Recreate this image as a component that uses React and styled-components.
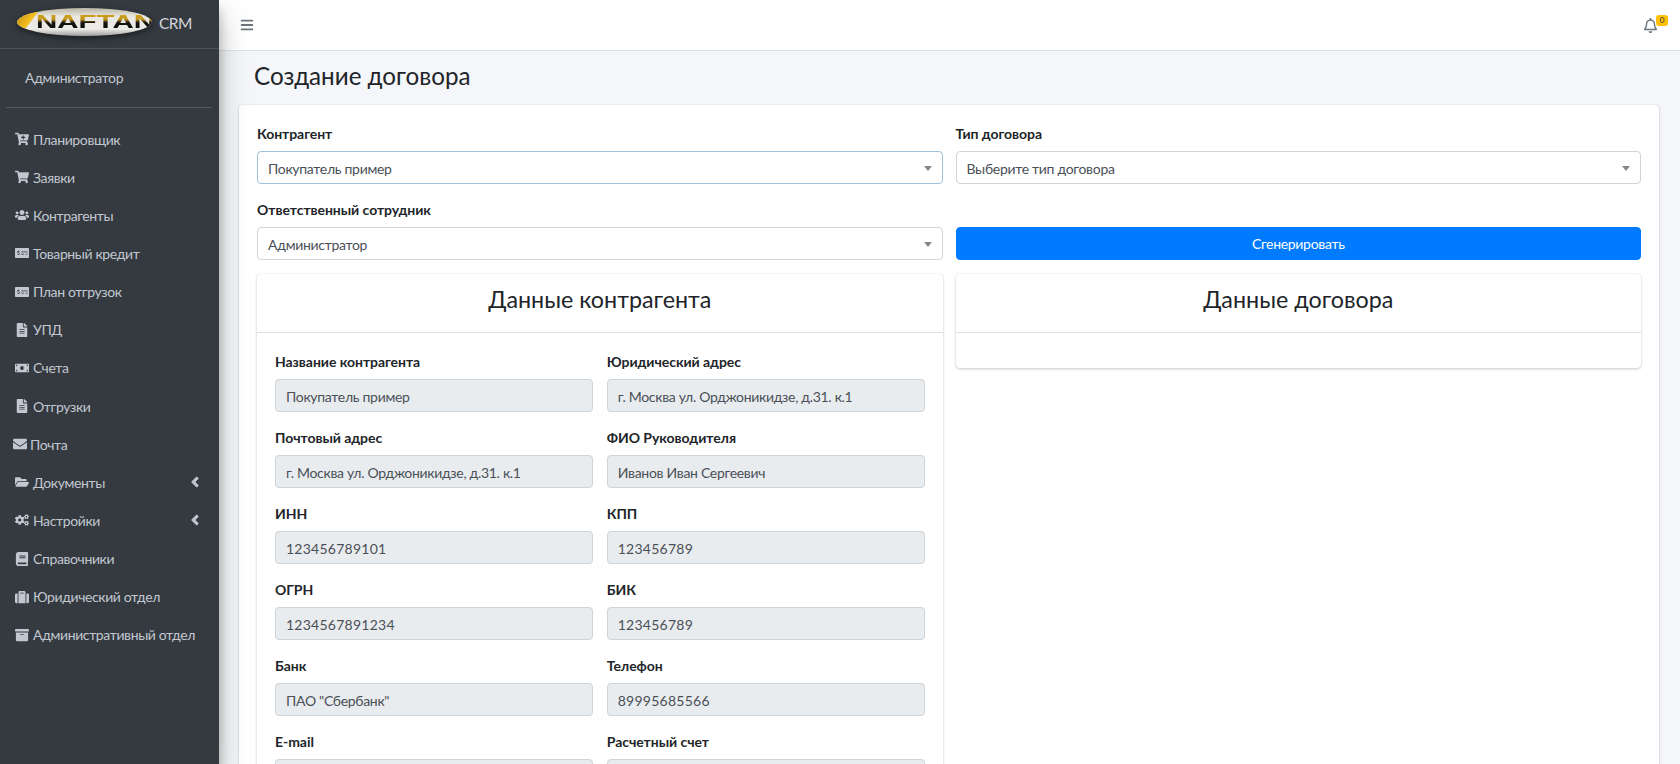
import React from "react"
import styled, { createGlobalStyle } from "styled-components"
import {
  FaArchive, FaBars, FaBook, FaCartPlus, FaCogs, FaEnvelope, FaFileAlt, FaFolderOpen,
  FaAngleLeft, FaMoneyBill, FaMoneyCheckAlt, FaRegBell, FaShoppingCart, FaSuitcase, FaUsers,
} from "react-icons/fa"

const GlobalStyle = createGlobalStyle`
  html, body { margin: 0; padding: 0; height: 100%; overflow: hidden; }
  body {
    font-family: Lato, "Noto Sans", sans-serif;
    font-size: 14px;
    letter-spacing: -0.3px;
    color: #212529;
    background: #f4f6f9;
  }
  * { box-sizing: border-box; }
`

const menu = [
  { icon: FaCartPlus, label: "Планировщик" },
  { icon: FaShoppingCart, label: "Заявки" },
  { icon: FaUsers, label: "Контрагенты" },
  { icon: FaMoneyCheckAlt, label: "Товарный кредит" },
  { icon: FaMoneyCheckAlt, label: "План отгрузок" },
  { icon: FaFileAlt, label: "УПД" },
  { icon: FaMoneyBill, label: "Счета" },
  { icon: FaFileAlt, label: "Отгрузки" },
  { icon: FaEnvelope, label: "Почта", narrow: true },
  { icon: FaFolderOpen, label: "Документы", more: true },
  { icon: FaCogs, label: "Настройки", more: true },
  { icon: FaBook, label: "Справочники" },
  { icon: FaSuitcase, label: "Юридический отдел" },
  { icon: FaArchive, label: "Административный отдел" },
]

const fields = [
  ["Название контрагента", "Покупатель пример"],
  ["Юридический адрес", "г. Москва ул. Орджоникидзе, д.31. к.1"],
  ["Почтовый адрес", "г. Москва ул. Орджоникидзе, д.31. к.1"],
  ["ФИО Руководителя", "Иванов Иван Сергеевич"],
  ["ИНН", "123456789101"],
  ["КПП", "123456789"],
  ["ОГРН", "1234567891234"],
  ["БИК", "123456789"],
  ["Банк", 'ПАО "Сбербанк"'],
  ["Телефон", "89995685566"],
  ["E-mail", ""],
  ["Расчетный счет", ""],
]

const Logo = () => (
  <LogoSvg viewBox="0 0 135 28" role="img" aria-label="Naftan">
    <defs>
      <clipPath id="logoClip">
        <ellipse cx="67.5" cy="14" rx="67.5" ry="14" />
      </clipPath>
      <linearGradient id="logoBody" x1="0" x2="0" y1="0" y2="1">
        <stop offset="0" stopColor="#b9b5a4" />
        <stop offset="0.3" stopColor="#e8e6df" />
        <stop offset="0.75" stopColor="#ecebe8" />
        <stop offset="1" stopColor="#9d9d9b" />
      </linearGradient>
      <linearGradient id="logoWedge" x1="0" x2="1" y1="0" y2="0.6">
        <stop offset="0" stopColor="#a97f10" />
        <stop offset="0.6" stopColor="#f0b91c" />
        <stop offset="1" stopColor="#f4d25a" />
      </linearGradient>
      <linearGradient id="logoLetters" x1="0" x2="0" y1="0" y2="1">
        <stop offset="0" stopColor="#d8a516" />
        <stop offset="0.42" stopColor="#c4961c" />
        <stop offset="0.58" stopColor="#14130f" />
        <stop offset="1" stopColor="#0c0c0c" />
      </linearGradient>
    </defs>
    <g clipPath="url(#logoClip)">
      <rect width="135" height="28" fill="url(#logoBody)" />
      <path d="M0 0H24L9 20H0Z" fill="url(#logoWedge)" />
      <text x="19" y="19.5" textLength="119" lengthAdjust="spacingAndGlyphs" fill="url(#logoLetters)">NAFTAN</text>
    </g>
  </LogoSvg>
)

const Field = ({ label, value }) => (
  <FormGroup>
    <Label>{label}</Label>
    <ReadonlyInput $digits={/^\d+$/.test(value)}>{value}</ReadonlyInput>
  </FormGroup>
)

const SelectField = ({ label, value, focused }) => (
  <FormGroup>
    <Label>{label}</Label>
    <Select $focused={focused}>{value}<Caret /></Select>
  </FormGroup>
)

export default function App() {
  return (
    <Layout>
      <GlobalStyle />
      <Sidebar>
        <Brand>
          <Logo />
          <BrandText>CRM</BrandText>
        </Brand>
        <UserPanel>Администратор</UserPanel>
        <Menu>
          {menu.map(({ icon: Icon, label, narrow, more }) => (
            <MenuItem key={label}>
              <IconSlot $narrow={narrow}><Icon /></IconSlot>
              {label}
              {more && <MoreIcon><FaAngleLeft /></MoreIcon>}
            </MenuItem>
          ))}
        </Menu>
      </Sidebar>
      <Main>
        <Topbar>
          <BarsButton><FaBars /></BarsButton>
          <Bell>
            <FaRegBell />
            <Badge>0</Badge>
          </Bell>
        </Topbar>
        <PageTitle>Создание договора</PageTitle>
        <Card>
          <TwoColumns>
            <SelectField label="Контрагент" value="Покупатель пример" focused />
            <SelectField label="Тип договора" value="Выберите тип договора" />
            <SelectField label="Ответственный сотрудник" value="Администратор" />
            <ButtonCell><PrimaryButton>Сгенерировать</PrimaryButton></ButtonCell>
          </TwoColumns>
          <TwoColumns>
            <SubCard>
              <SubCardTitle>Данные контрагента</SubCardTitle>
              <SubCardBody>
                <FieldGrid>
                  {fields.map(([label, value]) => <Field key={label} label={label} value={value} />)}
                </FieldGrid>
              </SubCardBody>
            </SubCard>
            <SubCard>
              <SubCardTitle>Данные договора</SubCardTitle>
              <SubCardBody />
            </SubCard>
          </TwoColumns>
        </Card>
      </Main>
    </Layout>
  )
}

const Layout = styled.div`
  display: flex;
  height: 100vh;
  overflow: hidden;
`

const Sidebar = styled.aside`
  flex: 0 0 219px;
  width: 219px;
  min-width: 0;
  background: #343a40;
  color: #c2c7d0;
  letter-spacing: -0.38px;
  box-shadow: 0 14px 28px rgba(0, 0, 0, 0.25), 0 10px 10px rgba(0, 0, 0, 0.22);
  z-index: 2;
`

const Brand = styled.div`
  height: 49px;
  display: flex;
  align-items: flex-start;
  gap: 7px;
  padding: 8px 0 0 17px;
  border-bottom: 1px solid #4b545c;
`

const LogoSvg = styled.svg`
  width: 135px;
  height: 28px;
  flex: none;
  filter: drop-shadow(0 2px 3px rgba(0, 0, 0, 0.5));
  text {
    font-family: "Liberation Sans", sans-serif;
    font-size: 19px;
    font-weight: 700;
    letter-spacing: 0;
  }
`

const BrandText = styled.span`
  font-size: 15.5px;
  line-height: 30px;
  font-weight: 400;
  letter-spacing: -0.5px;
  color: rgba(255, 255, 255, 0.8);
`

const UserPanel = styled.div`
  height: 59px;
  margin: 0 7px 12px 6px;
  padding: 0 0 2px 19px;
  display: flex;
  align-items: center;
  border-bottom: 1px solid #4f5962;
`

const Menu = styled.nav`
  display: flex;
  flex-direction: column;
`

const MenuItem = styled.a`
  height: 38.15px;
  flex: none;
  display: flex;
  align-items: center;
  padding: 0 16px 0 11px;
  white-space: nowrap;
`

const IconSlot = styled.span`
  flex: none;
  width: ${(p) => (p.$narrow ? "18px" : "21px")};
  margin-right: 1px;
  display: flex;
  justify-content: center;
  svg {
    flex: none;
    width: auto;
    height: 14px;
  }
`

const MoreIcon = styled.span`
  margin-left: auto;
  display: flex;
  font-size: 16px;
  svg {
    stroke: currentColor;
    stroke-width: 24px;
  }
`

const Main = styled.main`
  flex: 1;
  min-width: 0;
`

const Topbar = styled.header`
  height: 51px;
  padding: 0 13px 0 21px;
  display: flex;
  align-items: center;
  justify-content: space-between;
  background: #fff;
  border-bottom: 1px solid #dee2e6;
`

const BarsButton = styled.span`
  display: flex;
  color: #6c757d;
  font-size: 14px;
`

const Bell = styled.span`
  position: relative;
  display: flex;
  margin-right: 9px;
  color: #6c757d;
  font-size: 15px;
`

const Badge = styled.span`
  position: absolute;
  top: -3px;
  right: -10px;
  width: 12px;
  height: 11px;
  border-radius: 3px;
  background: #ffc107;
  color: #1f2d3d;
  font-size: 8px;
  line-height: 11px;
  letter-spacing: 0;
  text-align: center;
`

const PageTitle = styled.h1`
  margin: 0;
  height: 54px;
  padding: 8px 0 0 35px;
  font-size: 24.2px;
  line-height: 34px;
  font-weight: 400;
  letter-spacing: 0;
`

const Card = styled.section`
  margin: 0 21px 0 20px;
  padding: 17px 18px 0;
  background: #fff;
  border-radius: 4px;
  box-shadow: 0 0 1px rgba(0, 0, 0, 0.125), 0 1px 3px rgba(0, 0, 0, 0.2);
`

const TwoColumns = styled.div`
  display: grid;
  grid-template-columns: 1fr 1fr;
  column-gap: 13px;
  align-items: start;
`

const FormGroup = styled.div`
  margin-bottom: 14px;
`

const Label = styled.div`
  height: 24px;
  margin-bottom: 5px;
  line-height: 24px;
  font-weight: 700;
  letter-spacing: -0.05px;
`

const Select = styled.div`
  position: relative;
  height: 33px;
  padding: 1px 10px 0;
  display: flex;
  align-items: center;
  background: #fff;
  color: #495057;
  border: 1px solid ${(p) => (p.$focused ? "#9fc1db" : "#ced4da")};
  border-radius: 4px;
`

const Caret = styled.span`
  position: absolute;
  top: 14px;
  right: 10px;
  border-style: solid;
  border-width: 5px 4px 0;
  border-color: #888 transparent transparent;
`

const ButtonCell = styled.div`
  padding-top: 29px;
`

const PrimaryButton = styled.button`
  display: block;
  width: 100%;
  height: 33px;
  padding: 0;
  font: inherit;
  letter-spacing: inherit;
  color: #fff;
  background: #007bff;
  border: 1px solid #007bff;
  border-radius: 4px;
`

const SubCard = styled.div`
  background: #fff;
  border-radius: 4px;
  box-shadow: 0 0 1px rgba(0, 0, 0, 0.125), 0 1px 3px rgba(0, 0, 0, 0.2);
`

const SubCardTitle = styled.h2`
  margin: 0;
  height: 59px;
  font-size: 23.3px;
  line-height: 50px;
  font-weight: 400;
  letter-spacing: 0;
  text-align: center;
  border-bottom: 1px solid rgba(0, 0, 0, 0.125);
`

const SubCardBody = styled.div`
  min-height: 35px;
  padding: 17px 18px 0;
`

const FieldGrid = styled.div`
  display: grid;
  grid-template-columns: 1fr 1fr;
  column-gap: 14px;
`

const ReadonlyInput = styled.div`
  height: 33px;
  padding: 1px 10px 0;
  display: flex;
  align-items: center;
  background: #e9ecef;
  color: #495057;
  border: 1px solid #ced4da;
  border-radius: 4px;
  letter-spacing: ${(p) => (p.$digits ? "0.25px" : "inherit")};
`
